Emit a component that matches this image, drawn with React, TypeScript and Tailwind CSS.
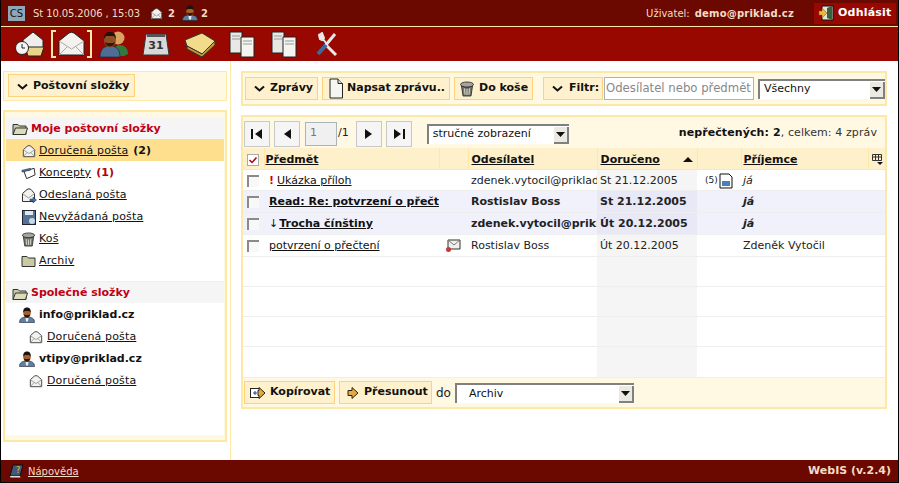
import React from "react";

const Envelope = ({ size = 14 }: { size?: number }) => (
    <svg width={size} height={size} viewBox="0 0 16 16" className="shrink-0">
        <path d="M1.500 6.500 6 2.500Q8 1 10 2.500l4.500 4v8h-13z" fill="#f4f2ee" stroke="#333" />
        <path d="M1.500 6.500 8 11l6.500-4.500M1.500 14.500 6 9.500M14.500 14.500 10 9.500" fill="none" stroke="#999" />
    </svg>
);

const SentEnvelope = () => (
    <svg width="16" height="16" viewBox="0 0 16 16" className="shrink-0">
        <path d="M1.500 6.500 6 2.500Q8 1 10 2.500l3.500 4v8h-12z" fill="#f4f2ee" stroke="#333" />
        <path d="M1.500 6.500 7.500 11l6-4.500" fill="none" stroke="#999" />
        <path d="M9 12h3v-2l3.500 3-3.500 3v-2H9z" fill="#3f6fa8" stroke="#1d3a5c" strokeWidth=".5" />
    </svg>
);

const Person = ({ size = 16 }: { size?: number }) => (
    <svg width={size} height={size} viewBox="0 0 16 16" className="shrink-0">
        <path d="M.500 15.500c0-4 2.500-5.500 7.500-5.500s7.500 1.500 7.500 5.500z" fill="#5d7fa3" stroke="#223" strokeWidth=".6" />
        <path d="M6.500 11h3l-.5 3.500H7z" fill="#e8eef4" />
        <ellipse cx="8" cy="6" rx="3.800" ry="4.800" fill="#a85f2a" />
        <path d="M4.200 5.500C4.200 1.200 6 .4 8 .4s3.800.8 3.800 5.100L10 4H6z" fill="#1c130d" />
        <path d="M4.800 7.500c1 4.200 5.400 4.200 6.400 0L9.500 8h-3z" fill="#2b1a10" />
    </svg>
);

const Trash = ({ size = 16 }: { size?: number }) => (
    <svg width={size} height={size} viewBox="0 0 16 16" className="shrink-0">
        <path d="M2.500 5 4 15h8l1.500-10c-3 1.500-8 1.500-11 0z" fill="#77776f" stroke="#222" strokeWidth=".8" />
        <ellipse cx="8" cy="3.500" rx="6.500" ry="2.500" fill="#a5a5a0" stroke="#222" strokeWidth=".8" />
        <path d="M5.500 7.500 6 13.500M8 8v6M10.500 7.500l-.5 6" stroke="#d8d8d0" />
    </svg>
);

const Folder = ({ open = false }: { open?: boolean }) => (
    <svg width="16" height="14" viewBox="0 0 16 14" className="shrink-0">
        <path d="M1 12.500V2.500h5l1.500 1.500H14v8.500z" fill="#c9c9a4" stroke="#333" />
        {open && <path d="M1 12.500 3.500 6H15.500l-2 6.500z" fill="#dcdcb8" stroke="#333" />}
    </svg>
);

const Chevron = () => (
    <svg width="11" height="7" viewBox="0 0 11 7" className="shrink-0">
        <path d="M1 1.500 5.500 5.500 10 1.500" fill="none" stroke="#111" strokeWidth="2" />
    </svg>
);

const Page = () => (
    <svg width="16" height="21" viewBox="0 0 16 21" className="shrink-0">
        <path d="M2 1h8l4.500 4.500V20H2z" fill="#f6f6f2" stroke="#222" />
        <path d="M10 1v4.500h4.500" fill="#ddd" stroke="#222" />
    </svg>
);

const ArrowRightGold = ({ box = false }: { box?: boolean }) => (
    <svg width="16" height="14" viewBox="0 0 16 14" className="shrink-0">
        {box && <rect x=".5" y="2.500" width="9" height="9" fill="#fff" stroke="#222" />}
        {box && <path d="M3 7h4M5 5v4" stroke="#23408a" />}
        <path d={box ? "M9 1.500 15 7 9 12.500V9.500H8v-5h1z" : "M7 1.500 13 7 7 12.500V9.500H3v-5h4z"} fill="#e9a93a" stroke="#222" />
    </svg>
);

function Select({ label, className, textClass = "pl-1" }: { label: string; className: string; textClass?: string }) {
    return (
        <div className={`flex h-5 shrink-0 items-center justify-between border-t-2 border-l-2 border-[#808080] bg-white ${className}`}>
            <span className={`text-[11px] text-[#111] ${textClass}`}>{label}</span>
            <span className="flex h-[17px] w-[15px] items-center justify-center self-end border-r-2 border-b-2 border-[#808080] bg-[#ece9e2]">
                <svg width="9" height="5" viewBox="0 0 9 5">
                    <path d="M0 0h9L4.500 5z" fill="#111" />
                </svg>
            </span>
        </div>
    );
}

function ActionButton({ children, className = "" }: { children: React.ReactNode; className?: string }) {
    return (
        <div className={`flex h-[23px] shrink-0 items-center whitespace-nowrap border border-[#fdd27c] bg-[#fff1cd] text-[11px] font-bold text-[#111] ${className}`}>
            {children}
        </div>
    );
}

function PagerButton({ d }: { d: string }) {
    return (
        <div className="flex h-[26px] w-[26px] items-center justify-center border border-[#c8c8c8] bg-[#f5f5f5]">
            <svg width="14" height="12" viewBox="0 0 14 12">
                <path d={d} fill="#111" />
            </svg>
        </div>
    );
}

function FolderRow({ icon, name, count, active, countRed }: { icon: React.ReactNode; name: string; count?: string; active?: boolean; countRed?: boolean }) {
    return (
        <div className={`flex h-[22px] items-center gap-[3px] pl-[15px] pt-[2px] text-[11px] text-[#111] ${active ? "bg-[#fddf8e]" : ""}`}>
            <span className="flex w-[15px] justify-center">{icon}</span>
            <a className="tracking-[.15px] underline">{name}</a>
            {count && <b className={`ml-[2px] ${countRed ? "text-[#b3000e]" : ""}`}>{count}</b>}
        </div>
    );
}

const rows = [
    { subject: "Ukázka příloh", mark: "!", from: "zdenek.vytocil@priklad.cz", date: "St 21.12.2005", to: "já", toItalic: true, attach: true },
    { subject: "Read: Re: potvrzení o přečtení", from: "Rostislav Boss", date: "St 21.12.2005", to: "já", toItalic: true, unread: true },
    { subject: "Trocha čínštiny", mark: "↓", from: "zdenek.vytocil@priklad.cz", date: "Út 20.12.2005", to: "já", toItalic: true, unread: true },
    { subject: "potvrzení o přečtení", from: "Rostislav Boss", date: "Út 20.12.2005", to: "Zdeněk Vytočil", receipt: true },
];

export default function App() {
    return (
        <div className="flex h-[483px] w-[899px] flex-col overflow-hidden border-x border-b border-black bg-white font-['DejaVu_Sans',sans-serif] text-[11px]">
            <header className="flex h-[27px] shrink-0 items-center border-b border-[#fde9a5] bg-[#6b0900] pl-[7px] pr-[2px] text-[10px] text-[#f3dcc6]">
                <span className="flex h-[15px] w-[17px] items-center justify-center bg-[#8fa5b8] text-[#111]">CS</span>
                <span className="ml-[8px] tracking-[-.1px]">St 10.05.2006 , 15:03</span>
                <span className="ml-[10px]"><Envelope size={13} /></span>
                <b className="ml-[5px]">2</b>
                <span className="ml-[7px]"><Person size={16} /></span>
                <b className="ml-[3px]">2</b>
                <span className="ml-auto">Uživatel:</span>
                <b className="ml-[5px] tracking-[.2px]">demo@priklad.cz</b>
                <div className="ml-[20px] flex h-[21px] w-[82px] items-center gap-[4px] bg-[#990800] pl-[4px] font-bold text-white">
                    <svg width="16" height="16" viewBox="0 0 16 16">
                        <rect x="4" y="1" width="11" height="14" fill="#dfe6d8" stroke="#111" />
                        <path d="M9 3l5-2v14l-5-2z" fill="#38613f" />
                        <path d="M1 6h3V3l5 5-5 5v-3H1z" fill="#eeb63e" stroke="#7a5510" strokeWidth=".5" />
                    </svg>
                    <span className="text-[11px] tracking-[.2px]">Odhlásit</span>
                </div>
            </header>

            <nav className="flex h-[34px] shrink-0 items-center bg-[#990800] pl-[13px]">
                <svg width="32" height="29" viewBox="0 0 32 29">
                    <path d="M9 10 19 2l10 8v9H9z" fill="#f0eeea" stroke="#222" />
                    <path d="M11 17h19l-3 9H14z" fill="#e8d48a" stroke="#222" />
                    <circle cx="8" cy="18" r="6.500" fill="#f4f4f4" stroke="#222" />
                    <path d="M8 14v4h3" fill="none" stroke="#222" />
                </svg>
                <svg className="ml-[5px]" width="41" height="28" viewBox="0 0 41 28">
                    <path d="M5 1H1v26h4M36 1h4v26h-4" fill="none" stroke="#fde9a5" strokeWidth="2" />
                    <path d="M8 11 18 3q2.500-1.500 5 0l10 8v14H8z" fill="#f4f2ee" stroke="#222" />
                    <path d="M8 11l12.500 8L33 11M8 25l9-9M33 25l-9-9" fill="none" stroke="#aaa" />
                </svg>
                <svg className="ml-[7px]" width="30" height="28" viewBox="0 0 30 28">
                    <circle cx="19" cy="8" r="6.500" fill="#d9a460" />
                    <path d="M14 26c0-8 3-11 7-11s8 3 8 9l-4 2z" fill="#2f7a3c" />
                    <path d="M1 27c0-8 4-11 10-11s10 3 10 11z" fill="#4f6e97" stroke="#123" strokeWidth=".6" />
                    <ellipse cx="11" cy="10" rx="6" ry="7.500" fill="#8f4f24" />
                    <path d="M5 9C5 3 8 2 11 2s6 1 6 7l-2-3H7z" fill="#1c130d" />
                    <path d="M6 12c1.500 6 8.500 6 10 0l-2 1H8z" fill="#2b1a10" />
                </svg>
                <svg className="ml-[13px]" width="28" height="25" viewBox="0 0 28 25">
                    <path d="M4 2h20l3 21H1z" fill="#d8d8d8" stroke="#333" />
                    <path d="M5 2h18v3H5z" fill="#555" />
                    <text x="14" y="17" textAnchor="middle" fontSize="11" fontWeight="700" fill="#333" fontFamily="DejaVu Sans">31</text>
                </svg>
                <svg className="ml-[14px]" width="32" height="26" viewBox="0 0 32 26">
                    <path d="M1 9 18 2l13 8-13 13L3 15z" fill="#f2dc8c" stroke="#333" />
                    <path d="M3 15l15 8 13-13v4L18 26 3 18z" fill="#c69a3c" stroke="#333" />
                </svg>
                {[0, 1].map((i) => (
                    <svg key={i} className={i === 0 ? "ml-[13px]" : "ml-[16px]"} width="26" height="27" viewBox="0 0 26 27">
                        <path d="M1 1h12v21H1z" fill="#e8e8e4" stroke="#222" />
                        <path d="M12 6h13v20H12z" fill="#f4f4f0" stroke="#222" />
                        <path d="M3 5h8M3 8h8M14 10h9M14 13h9" stroke="#999" />
                    </svg>
                ))}
                <svg className="ml-[19px]" width="22" height="24" viewBox="0 0 22 24">
                    <path d="M4 3l6 8M6 1 3 3l1 4 2 1 2-2z" fill="#eee" stroke="#e8e8e8" strokeWidth="2" />
                    <path d="M9 12l11 11" stroke="#e8e8e8" strokeWidth="3" />
                    <path d="M19 2 9 14" stroke="#e8e8e8" strokeWidth="3" />
                    <path d="M10 13 2 22" stroke="#3a6aa0" strokeWidth="4" />
                </svg>
            </nav>

            <div className="flex min-h-0 flex-1">
                <aside className="flex w-[230px] shrink-0 flex-col border-r border-[#fde9a5] pl-[2px] pr-[3px] pt-[10px]">
                    <div className="flex h-[30px] items-start border border-[#fde9a5] bg-[#fff8e3] pl-[4px] pt-[2px]">
                        <ActionButton className="w-[127px] gap-[5px] border-[#fdc95f] pl-[8px] pt-[2px]">
                            <Chevron />
                            <span>Poštovní složky</span>
                        </ActionButton>
                    </div>
                    <div className="mt-[9px] h-[332px] border-2 border-[#fde9a5] bg-[#fff8e3] px-[1px] pb-[5px] pt-[5px]">
                        <div className="flex h-full flex-col bg-white">
                            <div className="flex h-[22px] items-center gap-[3px] bg-[#f5f5f5] pl-[6px] pt-[2px] font-bold text-[#c00014]">
                                <Folder open />
                                <span>Moje poštovní složky</span>
                            </div>
                            <FolderRow active icon={<Envelope />} name="Doručená pošta" count="(2)" />
                            <FolderRow icon={<svg width="16" height="14" viewBox="0 0 16 14"><path d="M3 5 14 2l1 7-9 4z" fill="#fff" stroke="#222" /><path d="M1 4l9-2v2l-9 2z" fill="#4a6fa0" stroke="#222" strokeWidth=".5" /></svg>} name="Koncepty" count="(1)" countRed />
                            <FolderRow icon={<SentEnvelope />} name="Odeslaná pošta" />
                            <FolderRow icon={<svg width="14" height="15" viewBox="0 0 14 15"><rect x=".5" y=".5" width="13" height="14" fill="#557296" stroke="#223" /><rect x="3" y="1" width="8" height="4" fill="#dfe6ee" /><circle cx="10" cy="11" r="3" fill="#c9d8e4" /></svg>} name="Nevyžádaná pošta" />
                            <FolderRow icon={<Trash size={15} />} name="Koš" />
                            <FolderRow icon={<Folder />} name="Archiv" />
                            <div className="mt-[10px] flex h-[22px] items-center gap-[3px] border-t border-[#eeeeee] bg-[#f5f5f5] pl-[6px] pt-[2px] font-bold text-[#c00014]">
                                <Folder open />
                                <span>Společné složky</span>
                            </div>
                            <div className="flex h-[22px] items-center gap-[4px] pl-[13px] pt-[2px] font-bold text-[#111]">
                                <Person />
                                <span>info@priklad.cz</span>
                            </div>
                            <div className="flex h-[22px] items-center gap-[4px] pl-[23px] pt-[2px] text-[#111]">
                                <Envelope />
                                <a className="tracking-[.15px] underline">Doručená pošta</a>
                            </div>
                            <div className="flex h-[22px] items-center gap-[4px] pl-[13px] pt-[2px] font-bold text-[#111]">
                                <Person />
                                <span>vtipy@priklad.cz</span>
                            </div>
                            <div className="flex h-[22px] items-center gap-[4px] pl-[23px] pt-[2px] text-[#111]">
                                <Envelope />
                                <a className="tracking-[.15px] underline">Doručená pošta</a>
                            </div>
                        </div>
                    </div>
                </aside>

                <main className="flex min-w-0 flex-1 flex-col pl-[10px] pr-[11px] pt-[10px]">
                    <div className="flex h-[35px] items-center gap-[4px] border-2 border-[#fde9a5] bg-[#fff8e3] pl-[2px]">
                        <ActionButton className="w-[73px] gap-[5px] pl-[8px]">
                            <Chevron />
                            <span>Zprávy</span>
                        </ActionButton>
                        <ActionButton className="w-[128px] gap-[3px] pl-[5px]">
                            <Page />
                            <span>Napsat zprávu..</span>
                        </ActionButton>
                        <ActionButton className="w-[79px] gap-[4px] pl-[4px]">
                            <Trash size={16} />
                            <span>Do koše</span>
                        </ActionButton>
                        <ActionButton className="ml-[6px] w-[60px] gap-[6px] border-[#fdc95f] pl-[8px]">
                            <Chevron />
                            <span>Filtr:</span>
                        </ActionButton>
                        <div className="ml-[-3px] flex h-[23px] w-[150px] shrink-0 items-center overflow-hidden whitespace-nowrap border border-[#a9b4bc] bg-white pl-[1px] text-[11.7px] text-[#888]">
                            Odesílatel nebo předmět
                        </div>
                        <Select label="Všechny" className="w-[127px]" />
                    </div>

                    <div className="mt-[9px] flex h-[294px] flex-col border-2 border-[#fde9a5] bg-[#fff8e3]">
                        <div className="flex h-[31px] shrink-0 items-center pl-[1px] pr-[8px] pt-[2px]">
                            <PagerButton d="M1 1h2v10H1zM12 1v10L5 6z" />
                            <span className="ml-[4px]"><PagerButton d="M11 1v10L4 6z" /></span>
                            <div className="ml-[5px] flex h-[24px] w-[32px] items-center border border-[#a9b4bc] bg-[#f0f0f0] pl-[4px] text-[#777]">1</div>
                            <span className="ml-[1px] text-[#222]">/1</span>
                            <span className="ml-[7px]"><PagerButton d="M3 1v10l7-5z" /></span>
                            <span className="ml-[4px]"><PagerButton d="M2 1v10l7-5zM11 1h2v10h-2z" /></span>
                            <Select label="stručné zobrazení" className="ml-[15px] w-[142px]" textClass="pl-[4px]" />
                            <span className="ml-auto tracking-[.1px] text-[#333]"><b className="text-[#111]">nepřečtených: 2</b>, celkem: 4 zpráv</span>
                        </div>

                        <table className="w-full flex-1 table-fixed border-collapse">
                            <colgroup>
                                <col className="w-[21px]" />
                                <col className="w-[175px]" />
                                <col className="w-[29px]" />
                                <col className="w-[129px]" />
                                <col className="w-[100px]" />
                                <col className="w-[44px]" />
                                <col />
                                <col className="w-[17px]" />
                            </colgroup>
                            <thead>
                                <tr className="h-[21px] bg-[#fff0cc] text-left font-bold text-[#111] [&>th]:pt-[3px]">
                                    <th className="border-r border-b border-[#fde9a5] pl-[4px]">
                                        <svg width="12" height="12" viewBox="0 0 12 12">
                                            <rect x=".5" y=".5" width="11" height="11" fill="#fff" stroke="#aaa" />
                                            <path d="M2.500 6 5 8.500 9.500 3.500" fill="none" stroke="#b3000e" strokeWidth="1.500" />
                                        </svg>
                                    </th>
                                    <th className="truncate border-r border-b border-[#fde9a5] pl-[1px]"><a className="underline">Předmět</a></th>
                                    <th className="border-r border-b border-[#fde9a5]" />
                                    <th className="border-r border-b border-[#fde9a5] pl-[3px]"><a className="underline">Odesílatel</a></th>
                                    <th className="border-r border-b border-[#fde9a5] pl-[3px]">
                                        <div className="flex items-center justify-between pr-[4px]">
                                            <a className="underline">Doručeno</a>
                                            <svg width="10" height="5" viewBox="0 0 10 5"><path d="M0 5h10L5 0z" fill="#111" /></svg>
                                        </div>
                                    </th>
                                    <th className="border-r border-b border-[#fde9a5]" />
                                    <th className="border-r border-b border-[#fde9a5] pl-[2px]"><a className="underline">Příjemce</a></th>
                                    <th className="border-b border-[#fde9a5] pl-[3px]">
                                        <svg width="11" height="11" viewBox="0 0 11 11">
                                            <path d="M.5.5h9v6h-9zM.5 3h9M3.500.5v6M6.500.5v6" fill="none" stroke="#333" />
                                            <path d="M5 8h6L8 11z" fill="#111" />
                                        </svg>
                                    </th>
                                </tr>
                            </thead>
                            <tbody>
                                {rows.map((r) => (
                                    <tr key={r.subject} className={`h-[22px] border-b border-[#eeeeee] text-[#222] first:h-[21px] [&>td]:pt-[2px] first:[&>td]:pt-[3px] ${r.unread ? "bg-[#f1f1fc] font-bold" : "bg-white"}`}>
                                        <td className="pl-[4px]">
                                            <span className="block h-[12px] w-[12px] border-t-2 border-l-2 border-[#8a8a8a] bg-[#f8f8f8]" />
                                        </td>
                                        <td className="overflow-hidden whitespace-nowrap pl-[5px] text-[#111]">
                                            {r.mark && <span className={r.mark === "!" ? "mr-[3px] font-bold text-[#d00000]" : "mr-[1px] font-normal"}>{r.mark}</span>}
                                            <a className="underline">{r.subject}</a>
                                        </td>
                                        <td className="pl-[6px]">
                                            {r.receipt && (
                                                <svg width="16" height="14" viewBox="0 0 16 14">
                                                    <path d="M3 1h12v9H3z" fill="#f0f0ec" stroke="#333" />
                                                    <path d="M3 1l6 5 6-5" fill="none" stroke="#777" />
                                                    <circle cx="3.500" cy="10.500" r="2.500" fill="#c43a3a" />
                                                </svg>
                                            )}
                                        </td>
                                        <td className="overflow-hidden whitespace-nowrap pl-[3px]">{r.from}</td>
                                        <td className={`pl-[3px] ${r.unread ? "bg-[#e8e8f7]" : "bg-[#f5f5f5]"}`}>{r.date}</td>
                                        <td className="pl-[8px] text-[9px]">
                                            {r.attach && (
                                                <span className="flex items-center gap-[1px]">
                                                    (5)
                                                    <svg width="14" height="16" viewBox="0 0 14 16">
                                                        <path d="M1 1h9l3 3v11H1z" fill="#fff" stroke="#111" />
                                                        <rect x="3" y="8" width="8" height="5" fill="#4a7fb8" />
                                                    </svg>
                                                </span>
                                            )}
                                        </td>
                                        <td className={`pl-[2px] ${r.toItalic ? "italic" : ""}`}>{r.to}</td>
                                        <td />
                                    </tr>
                                ))}
                                {[0, 1, 2].map((i) => (
                                    <tr key={i} className="h-[30px] border-b border-[#eeeeee] bg-white">
                                        <td colSpan={4} />
                                        <td className="bg-[#f5f5f5]" />
                                        <td colSpan={3} />
                                    </tr>
                                ))}
                                <tr className="bg-white">
                                    <td colSpan={4} />
                                    <td className="bg-[#f5f5f5]" />
                                    <td colSpan={3} />
                                </tr>
                            </tbody>
                        </table>

                        <div className="flex h-[30px] shrink-0 items-center gap-[4px] border-t border-[#eeeeee] pl-[1px]">
                            <ActionButton className="w-[91px] gap-[4px] pl-[5px]">
                                <ArrowRightGold box />
                                <span>Kopírovat</span>
                            </ActionButton>
                            <ActionButton className="w-[93px] gap-[3px] pl-[5px]">
                                <ArrowRightGold />
                                <span>Přesunout</span>
                            </ActionButton>
                            <span className="text-[12px] text-[#222]">do</span>
                            <Select label="Archiv" className="mt-[1px] w-[179px]" textClass="pl-[12px]" />
                        </div>
                    </div>
                </main>
            </div>

            <footer className="flex h-[22px] shrink-0 items-center justify-between bg-[#6b0900] pl-[8px] pr-[7px] text-[10px] text-[#f3dcc6]">
                <div className="flex items-center gap-[4px]">
                    <svg width="15" height="14" viewBox="0 0 15 14">
                        <path d="M4 1h10l-3 11H1z" fill="#3e5a78" stroke="#111" />
                        <path d="M1 12h10l.5 1.500H1.500z" fill="#ddd" />
                        <text x="7" y="9" fontSize="8" fill="#e8c040" fontFamily="DejaVu Sans">?</text>
                    </svg>
                    <a className="underline">Nápověda</a>
                </div>
                <b className="text-[11px]">WebIS (v.2.4)</b>
            </footer>
        </div>
    );
}
